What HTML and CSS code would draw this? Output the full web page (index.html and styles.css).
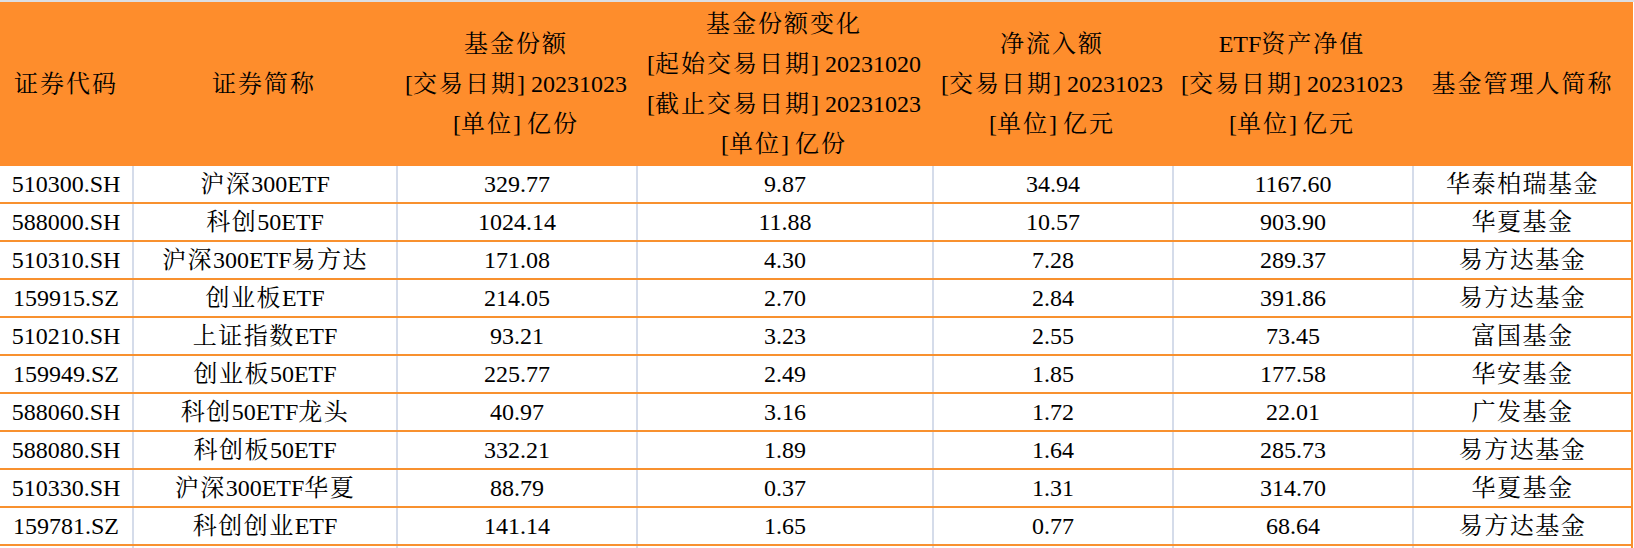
FILE: index.html
```html
<!DOCTYPE html>
<html lang="zh-CN">
<head>
<meta charset="utf-8">
<title>ETF 资金流向</title>
<link rel="stylesheet" href="styles.css">
</head>
<body>
<div class="topbar"></div>
<div class="table">
  <div class="row head">
    <div class="cell"><span class="zh">证券代码</span></div>
    <div class="cell"><span class="zh">证券简称</span></div>
    <div class="cell">
      <div><span class="zh">基金份额</span></div>
      <div>[<span class="zh">交易日期</span>] 20231023</div>
      <div>[<span class="zh">单位</span>] <span class="zh">亿份</span></div>
    </div>
    <div class="cell">
      <div><span class="zh">基金份额变化</span></div>
      <div>[<span class="zh">起始交易日期</span>] 20231020</div>
      <div>[<span class="zh">截止交易日期</span>] 20231023</div>
      <div>[<span class="zh">单位</span>] <span class="zh">亿份</span></div>
    </div>
    <div class="cell">
      <div><span class="zh">净流入额</span></div>
      <div>[<span class="zh">交易日期</span>] 20231023</div>
      <div>[<span class="zh">单位</span>] <span class="zh">亿元</span></div>
    </div>
    <div class="cell">
      <div>ETF<span class="zh">资产净值</span></div>
      <div>[<span class="zh">交易日期</span>] 20231023</div>
      <div>[<span class="zh">单位</span>] <span class="zh">亿元</span></div>
    </div>
    <div class="cell"><span class="zh">基金管理人简称</span></div>
  </div>

  <div class="row">
    <div class="cell">510300.SH</div>
    <div class="cell"><span class="zh">沪深</span>300ETF</div>
    <div class="cell">329.77</div>
    <div class="cell">9.87</div>
    <div class="cell">34.94</div>
    <div class="cell">1167.60</div>
    <div class="cell"><span class="zh">华泰柏瑞基金</span></div>
  </div>
  <div class="row">
    <div class="cell">588000.SH</div>
    <div class="cell"><span class="zh">科创</span>50ETF</div>
    <div class="cell">1024.14</div>
    <div class="cell">11.88</div>
    <div class="cell">10.57</div>
    <div class="cell">903.90</div>
    <div class="cell"><span class="zh">华夏基金</span></div>
  </div>
  <div class="row">
    <div class="cell">510310.SH</div>
    <div class="cell"><span class="zh">沪深</span>300ETF<span class="zh">易方达</span></div>
    <div class="cell">171.08</div>
    <div class="cell">4.30</div>
    <div class="cell">7.28</div>
    <div class="cell">289.37</div>
    <div class="cell"><span class="zh">易方达基金</span></div>
  </div>
  <div class="row">
    <div class="cell">159915.SZ</div>
    <div class="cell"><span class="zh">创业板</span>ETF</div>
    <div class="cell">214.05</div>
    <div class="cell">2.70</div>
    <div class="cell">2.84</div>
    <div class="cell">391.86</div>
    <div class="cell"><span class="zh">易方达基金</span></div>
  </div>
  <div class="row">
    <div class="cell">510210.SH</div>
    <div class="cell"><span class="zh">上证指数</span>ETF</div>
    <div class="cell">93.21</div>
    <div class="cell">3.23</div>
    <div class="cell">2.55</div>
    <div class="cell">73.45</div>
    <div class="cell"><span class="zh">富国基金</span></div>
  </div>
  <div class="row">
    <div class="cell">159949.SZ</div>
    <div class="cell"><span class="zh">创业板</span>50ETF</div>
    <div class="cell">225.77</div>
    <div class="cell">2.49</div>
    <div class="cell">1.85</div>
    <div class="cell">177.58</div>
    <div class="cell"><span class="zh">华安基金</span></div>
  </div>
  <div class="row">
    <div class="cell">588060.SH</div>
    <div class="cell"><span class="zh">科创</span>50ETF<span class="zh">龙头</span></div>
    <div class="cell">40.97</div>
    <div class="cell">3.16</div>
    <div class="cell">1.72</div>
    <div class="cell">22.01</div>
    <div class="cell"><span class="zh">广发基金</span></div>
  </div>
  <div class="row">
    <div class="cell">588080.SH</div>
    <div class="cell"><span class="zh">科创板</span>50ETF</div>
    <div class="cell">332.21</div>
    <div class="cell">1.89</div>
    <div class="cell">1.64</div>
    <div class="cell">285.73</div>
    <div class="cell"><span class="zh">易方达基金</span></div>
  </div>
  <div class="row">
    <div class="cell">510330.SH</div>
    <div class="cell"><span class="zh">沪深</span>300ETF<span class="zh">华夏</span></div>
    <div class="cell">88.79</div>
    <div class="cell">0.37</div>
    <div class="cell">1.31</div>
    <div class="cell">314.70</div>
    <div class="cell"><span class="zh">华夏基金</span></div>
  </div>
  <div class="row">
    <div class="cell">159781.SZ</div>
    <div class="cell"><span class="zh">科创创业</span>ETF</div>
    <div class="cell">141.14</div>
    <div class="cell">1.65</div>
    <div class="cell">0.77</div>
    <div class="cell">68.64</div>
    <div class="cell"><span class="zh">易方达基金</span></div>
  </div>
  <div class="row">
    <div class="cell"></div>
    <div class="cell"></div>
    <div class="cell"></div>
    <div class="cell"></div>
    <div class="cell"></div>
    <div class="cell"></div>
    <div class="cell"></div>
  </div>
</div>
</body>
</html>
```

FILE: styles.css
```css
html, body {
  margin: 0;
  padding: 0;
  overflow: hidden;
  background: #ffffff;
}

body {
  font-family: "Liberation Serif", "Noto Serif CJK SC", "Noto Sans CJK SC", serif;
  font-size: 24px;
  color: #000000;
}

.topbar {
  height: 2px;
  background: #dcdfe3;
}

.table {
  width: 1633px;
}

.row {
  display: grid;
  grid-template-columns: 132px 264px 240px 296px 240px 240px 221px;
  height: 38px;
  border-bottom: 2px solid #f8912f;
  box-sizing: border-box;
}

.row .cell {
  display: block;
  text-align: center;
  line-height: 36px;
  white-space: nowrap;
  overflow: hidden;
  box-sizing: border-box;
}

.row .cell + .cell {
  border-left: 2px solid #d5dcea;
}

.row .cell:last-child {
  border-right: 2px solid #f8912f;
}

.zh {
  letter-spacing: 1.5px;
}

.head {
  height: 164px;
  border-bottom: none;
  background: #fe8d2c;
}

.head .cell {
  display: flex;
  flex-direction: column;
  align-items: center;
  justify-content: center;
  line-height: 40px;
}

.head .cell + .cell {
  border-left: none;
}

.head .cell:last-child {
  border-right: none;
}

.head .zh {
  letter-spacing: 2px;
}
```
